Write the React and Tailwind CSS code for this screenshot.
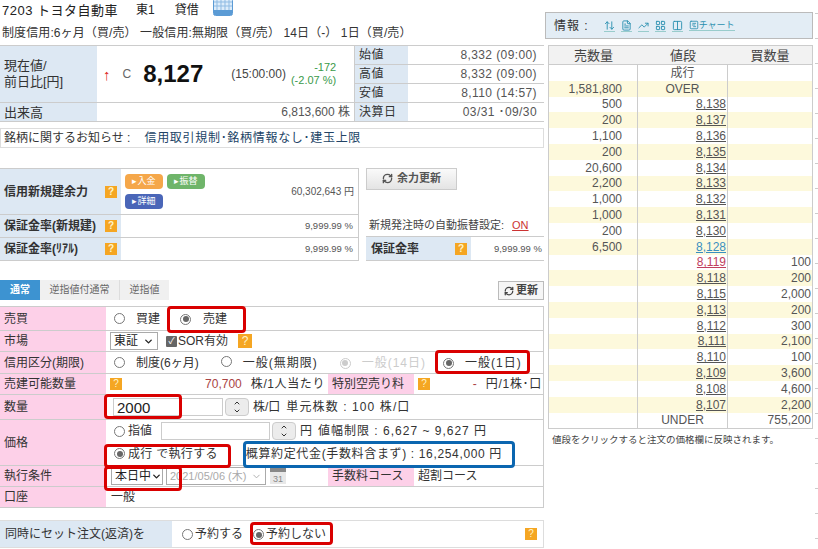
import { ArrowUpDown, FileText, TrendingUp, LayoutGrid, Columns2, RefreshCw, ChevronDown, ChevronUp, SquareChartGantt } from "lucide-react";

const sell = [
  ["", "成行", "", "center"],
  ["1,581,800", "OVER", "", "center"],
  ["500", "8,138", ""],
  ["200", "8,137", ""],
  ["1,100", "8,136", ""],
  ["200", "8,135", ""],
  ["20,600", "8,134", ""],
  ["2,200", "8,133", ""],
  ["1,000", "8,132", ""],
  ["1,000", "8,131", ""],
  ["200", "8,130", ""],
  ["6,500", "8,128", "", "blue"],
  ["", "8,119", "100", "red"],
  ["", "8,118", "200"],
  ["", "8,115", "2,000"],
  ["", "8,113", "200"],
  ["", "8,112", "300"],
  ["", "8,111", "2,100"],
  ["", "8,110", "100"],
  ["", "8,109", "3,600"],
  ["", "8,108", "4,600"],
  ["", "8,107", "2,200"],
  ["", "UNDER", "755,200", "center"],
];

const ticks = Array.from({ length: 22 }, (_, i) => i);

const Help = ({ className = "" }) => (
  <span className={`inline-flex h-[12px] w-[12px] shrink-0 items-center justify-center bg-[#f5a623] text-[10px] leading-none text-[#fff3c8] ${className}`}>?</span>
);

const Radio = ({ on, faded }) => (
  <span className={`inline-flex h-[11px] w-[11px] shrink-0 items-center justify-center rounded-full border ${faded ? "border-[#ccc]" : "border-[#777]"} bg-white`}>
    {on && <span className={`h-[6px] w-[6px] rounded-full ${faded ? "bg-[#ccc]" : "bg-[#666]"}`} />}
  </span>
);

const Stepper = () => (
  <span className="flex h-[18px] w-[24px] shrink-0 flex-col items-center justify-center rounded-sm border border-[#ccc] bg-[#ececec] text-[#333]">
    <ChevronUp size={8} strokeWidth={3} />
    <ChevronDown size={8} strokeWidth={3} />
  </span>
);

const Select = ({ children, className = "", faded }) => (
  <span className={`flex h-[18px] items-center justify-between whitespace-nowrap border border-[#aaa] bg-white px-[3px] ${faded ? "text-[#aaa]" : "text-[#222]"} ${className}`}>
    {children}
    <ChevronDown size={11} strokeWidth={faded ? 2 : 3} className="shrink-0" />
  </span>
);

const StockRow = ({ label, value, className = "" }) => (
  <div className={`flex items-center border-b border-[#ccc] ${className}`}>
    <span className="flex h-full w-[53px] items-center bg-[#dde8f3] pl-1 tracking-[0.5px]">{label}</span>
    <span className="flex-1 pr-[7px] text-right tracking-[0.4px] text-[#555]">{value}</span>
  </div>
);

const FormRow = ({ label, className = "", children }) => (
  <div className={`flex border-b border-[#ccc] ${className}`}>
    <span className="flex w-[106px] shrink-0 items-center whitespace-nowrap bg-[#fdd0e8] pl-1 text-[#333]">{label}</span>
    <div className="flex min-w-0 flex-1 items-center whitespace-nowrap pl-[8px]">{children}</div>
  </div>
);

const Mark = ({ className }) => (
  <span className={`pointer-events-none absolute rounded-[4px] border-[3px] ${className}`} />
);

const InfoIcon = ({ children }) => (
  <span className="flex items-center border-b border-[#9cc] text-[#2a8fb0]">{children}</span>
);

export default function App() {
  return (
    <div className="relative flex h-[549px] w-[818px] overflow-hidden bg-white font-['Liberation_Sans','Noto_Sans_CJK_JP',sans-serif] text-[12px] leading-none text-[#333]">
      <main className="w-[545px] shrink-0">
        <div className="flex h-[20px] items-center pl-[2px] text-[13px] text-[#222]">
          <span className="tracking-[0.5px]">7203 トヨタ自動車</span>
          <span className="ml-[18px] text-[12px]">東1</span>
          <span className="ml-[20px] text-[12px]">貸借</span>
          <svg className="ml-[14px] -mt-[6px]" width="20" height="18" viewBox="0 0 20 18">
            <rect x="0.5" y="0.5" width="19" height="17" rx="2" fill="#dcecfa" stroke="#5b9bd5" />
            <rect x="1" y="12" width="18" height="5" fill="#5b9bd5" />
            <path d="M4 1v11M8 1v11M12 1v11M16 1v11M1 4h18M1 8h18" stroke="#8fbbe3" />
          </svg>
        </div>
        <div className="flex h-[25px] items-center whitespace-nowrap pl-[2px] text-[12px] tracking-[0.1px] text-[#333]">
          制度信用:6ヶ月（買/売） 一般信用:無期限（買/売） 14日（-） 1日（買/売）
        </div>

        <section className="flex h-[77px] w-[544px] border-y border-[#ccc]">
          <div className="flex w-[354px] flex-col">
            <div className="flex h-[57px] border-b border-[#ccc]">
              <span className="flex w-[97px] items-center bg-[#dde8f3] pl-1 text-[13px] leading-[16px]">現在値/<br />前日比[円]</span>
              <div className="flex flex-1 items-center">
                <span className="ml-[6px] text-[15px] text-[#d22]">↑</span>
                <span className="ml-[12px] text-[#666]">C</span>
                <span className="ml-[12px] text-[24px] font-bold text-[#111]">8,127</span>
                <span className="ml-[28px] text-[12px] text-[#444]">(15:00:00)</span>
                <span className="ml-[5px] text-right text-[11px] leading-[13px] text-[#3a9a4a]">-172<br />(-2.07 %)</span>
              </div>
            </div>
            <div className="flex flex-1 items-center">
              <span className="flex h-full w-[97px] items-center bg-[#dde8f3] pl-1 text-[13px]">出来高</span>
              <span className="flex-1 pr-[4px] text-right text-[#555]">6,813,600 株</span>
            </div>
          </div>
          <div className="flex flex-1 flex-col border-l border-[#ccc]">
            <StockRow label="始値" value="8,332 (09:00)" className="flex-1" />
            <StockRow label="高値" value="8,332 (09:00)" className="flex-1" />
            <StockRow label="安値" value="8,110 (14:57)" className="flex-1" />
            <StockRow label="決算日" value="03/31 ･09/30" className="flex-1 border-b-0" />
          </div>
        </section>

        <div className="mt-[6px] flex h-[20px] w-[544px] items-center border border-[#ddd] pl-[3px] text-[12px]">
          銘柄に関するお知らせ :<span className="ml-[14px] tracking-[0.7px] text-[#246]">信用取引規制･銘柄情報なし･建玉上限</span>
        </div>

        <section className="mt-[20px] flex h-[93px] w-[544px]">
          <div className="flex w-[359px] flex-col border-y border-r border-[#ccc]">
            <div className="flex h-[46px] border-b border-[#ccc]">
              <span className="flex w-[121px] items-center justify-between bg-[#dde8f3] pl-1 pr-[4px] font-bold">信用新規建余力<Help /></span>
              <div className="flex flex-1 items-center justify-between pr-[4px]">
                <div className="ml-[4px] flex w-[84px] flex-wrap gap-x-[4px] gap-y-[5px] text-[9px] text-white">
                  <span className="flex h-[15px] w-[38px] items-center justify-center rounded-sm bg-[#f5a74a]">▸入金</span>
                  <span className="flex h-[15px] w-[38px] items-center justify-center rounded-sm bg-[#6fb56a]">▸振替</span>
                  <span className="flex h-[15px] w-[38px] items-center justify-center rounded-sm bg-[#4a66b8]">▸詳細</span>
                </div>
                <span className="text-[10px] text-[#555]">60,302,643 円</span>
              </div>
            </div>
            <div className="flex flex-1 border-b border-[#ccc]">
              <span className="flex w-[121px] items-center justify-between bg-[#dde8f3] pl-1 pr-[4px] text-[12px] font-bold whitespace-nowrap">保証金率(新規建)<Help /></span>
              <span className="flex flex-1 items-center justify-end pr-[5px] text-[9.5px] text-[#555]">9,999.99 %</span>
            </div>
            <div className="flex flex-1">
              <span className="flex w-[121px] items-center justify-between bg-[#dde8f3] pl-1 pr-[4px] font-bold">保証金率(ﾘｱﾙ)<Help /></span>
              <span className="flex flex-1 items-center justify-end pr-[5px] text-[9.5px] text-[#555]">9,999.99 %</span>
            </div>
          </div>
          <div className="ml-[7px] flex flex-1 flex-col">
            <button className="flex h-[22px] w-[91px] items-center justify-center gap-[4px] border border-[#ccc] bg-gradient-to-b from-[#fafafa] to-[#e4e4e4] text-[11px] font-bold text-[#555]">
              <RefreshCw size={11} strokeWidth={3} />余力更新
            </button>
            <div className="mt-[27px] flex h-[18px] items-center pl-[3px] text-[11px] text-[#444]">
              新規発注時の自動振替設定:<span className="ml-[8px] text-[#c33] underline">ON</span>
            </div>
            <div className="mt-[2px] flex h-[25px] border-y border-[#ccc]">
              <span className="flex w-[105px] items-center justify-between bg-[#dde8f3] pl-[5px] pr-[4px] font-bold">保証金率<Help /></span>
              <span className="flex flex-1 items-center justify-end pr-[2px] text-[9.5px] text-[#555]">9,999.99 %</span>
            </div>
          </div>
        </section>

        <div className="mt-[20px] flex h-[19px] w-[544px] items-end justify-between">
          <div className="flex h-[20px] text-[10px] text-[#666]">
            <span className="flex w-[40px] items-center justify-center bg-[#3d93d1] font-bold text-white">通常</span>
            <span className="flex w-[80px] items-center justify-center border-r border-[#ddd] bg-[#f0f0f0]">逆指値付通常</span>
            <span className="flex w-[49px] items-center justify-center bg-[#f0f0f0]">逆指値</span>
          </div>
          <button className="flex h-[19px] w-[46px] items-center justify-center gap-[2px] border border-[#bbb] bg-[#f6f6f6] text-[11px] font-bold text-[#444]">
            <RefreshCw size={10} strokeWidth={3} />更新
          </button>
        </div>

        <section className="mt-[6px] w-[544px] border-y border-r border-[#ccc] text-[12px]">
          <FormRow label="売買" className="h-[24px]">
            <Radio />
            <span className="ml-[11px]">買建</span>
            <span className="ml-[20px]"><Radio on /></span>
            <span className="ml-[12px]">売建</span>
          </FormRow>
          <FormRow label="市場" className="h-[21px]">
            <Select className="w-[48px] -ml-[4px]">東証</Select>
            <span className="ml-[8px] flex h-[11px] w-[11px] items-center justify-center rounded-[1px] bg-[#666] text-[9px] text-white">✓</span>
            <span className="ml-[1px]">SOR有効</span>
            <Help className="ml-[10px] h-[14px] w-[14px] text-[12px]" />
          </FormRow>
          <FormRow label="信用区分(期限)" className="h-[22px]">
            <Radio />
            <span className="ml-[11px]">制度(6ヶ月)</span>
            <span className="ml-[22px]"><Radio /></span>
            <span className="ml-[11px] tracking-[1px]">一般(無期限)</span>
            <span className="ml-[22px]"><Radio on faded /></span>
            <span className="ml-[11px] tracking-[1px] text-[#ccc]">一般(14日)</span>
            <span className="ml-[17px]"><Radio on /></span>
            <span className="ml-[11px] tracking-[1px]">一般(1日)</span>
          </FormRow>
          <div className="flex h-[21px] border-b border-[#ccc]">
            <span className="flex w-[106px] shrink-0 items-center bg-[#fdd0e8] pl-1">売建可能数量</span>
            <div className="flex w-[222px] items-center pl-[4px]">
              <Help />
              <span className="ml-auto text-[#a44]">70,700</span>
              <span className="ml-[9px] mr-[3px] tracking-[0.6px]">株/1人当たり</span>
            </div>
            <span className="flex w-[86px] items-center bg-[#fdd0e8] pl-1">特別空売り料</span>
            <div className="flex flex-1 items-center pl-[4px] pr-[1px]">
              <Help />
              <span className="ml-auto text-[#a44]">-</span>
              <span className="ml-[9px] tracking-[0.7px]">円/1株･口</span>
            </div>
          </div>
          <FormRow label="数量" className="h-[25px]">
            <span className="-ml-[1px] flex h-[18px] w-[110px] items-center border border-[#ccc] pl-[3px] text-[15px] text-[#222]">2000</span>
            <span className="ml-[2px]"><Stepper /></span>
            <span className="ml-[4px]">株/口</span>
            <span className="ml-[6px] tracking-[1.1px]">単元株数 : 100 株/口</span>
          </FormRow>
          <FormRow label="価格" className="h-[46px]">
            <div className="flex h-full flex-col">
              <div className="flex h-[23px] items-center">
                <Radio />
                <span className="ml-[3px]">指値</span>
                <span className="ml-[9px] h-[18px] w-[109px] border border-[#ccc]" />
                <span className="ml-[2px]"><Stepper /></span>
                <span className="ml-[4px]">円</span>
                <span className="ml-[6px] tracking-[1px]">値幅制限 : 6,627 ~ 9,627 円</span>
              </div>
              <div className="flex h-[23px] items-center">
                <Radio on />
                <span className="ml-[3px] tracking-[0.3px]">成行 で執行する</span>
                <span className="ml-[28px] tracking-[0.65px]">概算約定代金(手数料含まず) : 16,254,000 円</span>
              </div>
            </div>
          </FormRow>
          <div className="flex h-[21px] border-b border-[#ccc]">
            <span className="flex w-[106px] shrink-0 items-center bg-[#fdd0e8] pl-1">執行条件</span>
            <div className="flex w-[222px] items-center pl-[5px]">
              <Select className="w-[52px]">本日中</Select>
              <Select faded className="ml-[3px] w-[100px] text-[11px]">2021/05/06 (木)</Select>
              <span className="ml-[4px] flex h-[16px] w-[16px] items-end justify-center border-t-[4px] border-[#888] bg-[#e8e8e8] text-[9px] text-[#888]">31</span>
            </div>
            <span className="flex w-[86px] items-center bg-[#fdd0e8] pl-1">手数料コース</span>
            <span className="flex flex-1 items-center pl-[4px]">超割コース</span>
          </div>
          <FormRow label="口座" className="h-[20px] border-b-0">
            <span className="-ml-[3px]">一般</span>
          </FormRow>
        </section>

        <section className="mt-[12px] flex h-[28px] w-[544px] border-y border-r border-[#ddd]">
          <span className="flex w-[172px] items-center bg-[#dde8f3] pl-[5px]">同時にセット注文(返済)を</span>
          <div className="flex flex-1 items-center pl-[10px]">
            <Radio />
            <span className="ml-[2px]">予約する</span>
            <span className="ml-[10px]"><Radio on /></span>
            <span className="ml-[2px]">予約しない</span>
            <Help className="ml-auto mr-[6px]" />
          </div>
        </section>
      </main>

      <aside className="w-[273px] shrink-0">
        <div className="mt-[12px] flex h-[27px] w-[268px] items-center border border-[#bbb] bg-[#e3edf5] pl-[8px] text-[12px]">
          <span className="tracking-[1px]">情報 :</span>
          <div className="ml-[15px] flex items-center gap-[6px] text-[9px]">
            <InfoIcon><ArrowUpDown size={11} /></InfoIcon>
            <InfoIcon><FileText size={11} /></InfoIcon>
            <InfoIcon><TrendingUp size={11} /></InfoIcon>
            <InfoIcon><LayoutGrid size={11} /></InfoIcon>
            <InfoIcon><Columns2 size={11} /></InfoIcon>
            <InfoIcon><SquareChartGantt size={10} />チャート</InfoIcon>
          </div>
        </div>
        <div className="ml-[3px] mt-[6px] w-[265px] border border-[#ccc]">
          <div className="flex h-[19px] items-center border-b border-[#ccc] bg-[#f2f2f2] text-center text-[13px] text-[#444]">
            <span className="w-[89px]">売数量</span>
            <span className="w-[90px]">値段</span>
            <span className="flex-1">買数量</span>
          </div>
          {sell.map(([ask, price, bid, kind], i) => (
            <div key={i} className={`flex h-[15.8px] items-center text-[12px] text-[#555] ${i % 2 ? "bg-[#fdf9dc]" : "bg-white"}`}>
              <span className="flex h-full w-[89px] items-center justify-end border-r border-[#ccc] pr-[15px]">{ask}</span>
              {kind === "center" ? (
                <span className="flex h-full w-[90px] items-center justify-center border-r border-[#ccc]">{price}</span>
              ) : (
                <span className={`flex h-full w-[90px] items-center justify-end border-r border-[#ccc] pr-[1px] underline ${kind === "blue" ? "text-[#3a8fc0]" : kind === "red" ? "text-[#c04060]" : ""}`}>{price}</span>
              )}
              <span className="flex-1 pr-[1px] text-right">{bid}</span>
            </div>
          ))}
        </div>
        <p className="ml-[7px] mt-[4px] text-[9.5px] leading-[14px] text-[#444]">値段をクリックすると注文の価格欄に反映されます。</p>
      </aside>

      <div className="absolute right-0 top-[13px] flex flex-col gap-[24px]">
        {ticks.map((t) => (
          <span key={t} className="h-[1px] w-[3px] bg-[#ccc]" />
        ))}
      </div>

      <Mark className="left-[167px] top-[306px] h-[27px] w-[79px] border-[#d90000]" />
      <Mark className="left-[435px] top-[350px] h-[24px] w-[95px] border-[#d90000]" />
      <Mark className="left-[104px] top-[394px] h-[25px] w-[78px] border-[#d90000]" />
      <Mark className="left-[104px] top-[444px] h-[24px] w-[127px] border-[#d90000]" />
      <Mark className="left-[104px] top-[466px] h-[25px] w-[78px] border-[#d90000]" />
      <Mark className="left-[243px] top-[441px] h-[27px] w-[272px] border-[#0b66b0]" />
      <Mark className="left-[250px] top-[522px] h-[23px] w-[83px] border-[#d90000]" />
    </div>
  );
}
